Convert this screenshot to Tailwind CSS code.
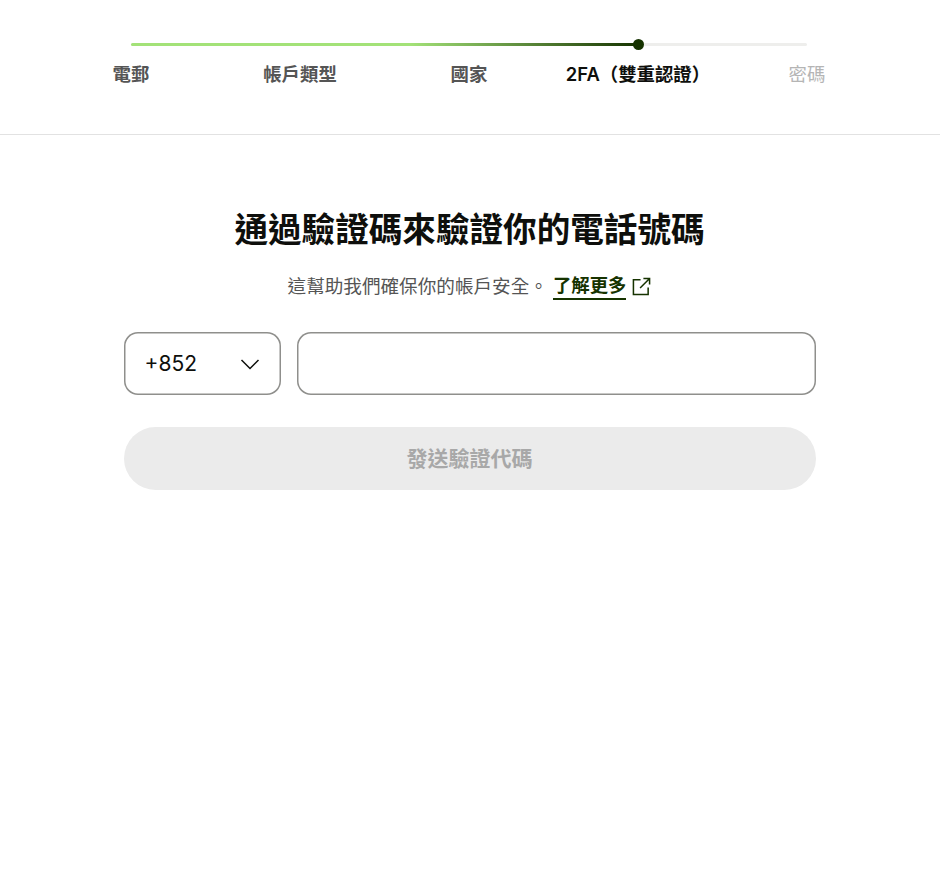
<!DOCTYPE html>
<html lang="zh-Hant">

<head>
    <meta charset="UTF-8">
    <meta name="viewport" content="width=device-width, initial-scale=1.0">
    <title>2FA</title>
    <script src="https://cdn.jsdelivr.net/npm/@tailwindcss/browser@4"></script>
</head>

<body class="bg-white font-['Inter','Noto_Sans_CJK_TC',sans-serif] overflow-hidden">
    <!-- stepper -->
    <div class="h-[135px] border-b border-[#e2e2e2] pt-[43px]">
        <div class="w-[676px] ml-[131px] h-[3px] rounded-full bg-[#eeeeec] flex items-center">
            <div class="w-[507px] h-[3px] rounded-l-full bg-[linear-gradient(90deg,#a3e278_0%,#a3e278_55%,#163300_100%)]"></div>
            <div class="w-[11px] h-[11px] -ml-[5px] rounded-full bg-[#163300]"></div>
        </div>
        <div class="w-[845px] ml-[46.5px] mt-[16px] grid grid-cols-5 text-center text-[18.4px] leading-[24px] font-semibold">
            <span class="text-[#555]">電郵</span>
            <span class="text-[#555]">帳戶類型</span>
            <span class="text-[#555]">國家</span>
            <span class="text-[#0e0f0c] whitespace-nowrap">2FA（雙重認證）</span>
            <span class="text-[#b5b5b5] font-normal">密碼</span>
        </div>
    </div>

    <!-- form -->
    <div class="w-[692px] ml-[123.5px] pt-[72px]">
        <h1 class="text-center text-[33.6px] leading-[46px] font-bold text-[#0e0f0c]">通過驗證碼來驗證你的電話號碼</h1>

        <p class="mt-[19px] flex justify-center items-center text-[18.6px] leading-[28px] text-[#555]">
            <span>這幫助我們確保你的帳戶安全。</span>
            <a href="#" class="ml-[5px] text-[18.4px] font-semibold text-[#163300] border-b-2 border-[#163300] leading-[26px]">了解更多</a>
            <svg class="ml-[6px]" width="19" height="19" viewBox="0 0 20 20" fill="none" stroke="#163300" stroke-width="1.6">
                <path d="M9 3H1.5V18.5H17V11" />
                <path d="M12 1.5H18.5V8M18.5 1.5L8.5 11.5" />
            </svg>
        </p>

        <div class="mt-[32px] flex gap-4">
            <button class="w-[157.5px] h-[63px] shrink-0 shadow-[inset_0_0_0_1.5px_#8f8f8c] rounded-[14px] pl-[21px] pr-[21px] flex items-center justify-between text-[21px] text-[#0e0f0c]">
                <span>+852</span>
                <svg width="20" height="20" viewBox="0 0 20 20" fill="none" stroke="#0e0f0c" stroke-width="1.5">
                    <path d="M1.5 6L10 14.5L18.5 6" />
                </svg>
            </button>
            <input class="flex-1 h-[63px] shadow-[inset_0_0_0_1.5px_#8f8f8c] rounded-[14px] px-4 outline-none">
        </div>

        <button disabled class="mt-[32px] w-full h-[63px] rounded-full bg-[#ebebeb] text-[#a8a8a8] text-[21px] font-semibold">發送驗證代碼</button>
    </div>
</body>

</html>
